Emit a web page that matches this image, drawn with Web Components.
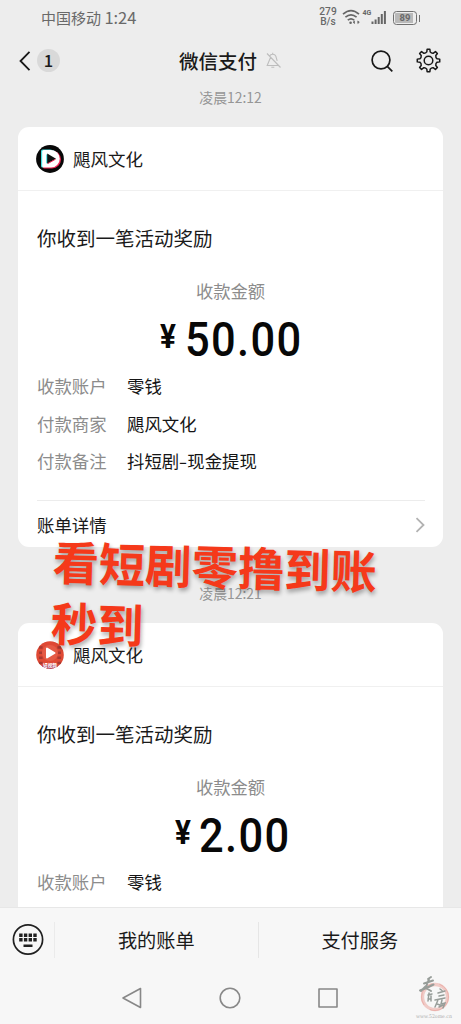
<!DOCTYPE html>
<html lang="zh-CN">
<head>
<meta charset="utf-8">
<title>微信支付</title>
<style>
html,body{margin:0;height:100%;overflow:hidden}
body{background:#ededed;font-family:"Noto Sans CJK SC",sans-serif;color:#1a1a1a}
</style>
</head>
<body>
<pay-app></pay-app>
<script>
const define = (name, html, after) => customElements.define(name, class extends HTMLElement {
  connectedCallback() {
    if (this.shadowRoot) return;
    const t = document.createElement('template');
    t.innerHTML = html;
    this.attachShadow({mode: 'open'}).append(t.content.cloneNode(true));
    if (after) after(this, this.shadowRoot);
  }
});

define('status-bar', `
<style>
:host{display:flex;height:36px;flex:none;align-items:center;padding:0 41px 0 41px;box-sizing:border-box;color:#696969;font-size:15px;line-height:20px}
.carrier{flex:1;white-space:nowrap;padding-bottom:2px}
.clock{font-size:16.500px}
.rate{display:flex;flex-direction:column;font:500 10.200px/11px Roboto,sans-serif;text-align:center;width:18px;margin-right:5px;margin-top:-2px}
.rate span{display:block;height:10.500px;line-height:10.500px}
svg{display:block}
.bat{display:flex;align-items:center;margin-left:5px}
.cell{box-sizing:border-box;width:24px;height:14px;border:1.4px solid #707070;border-radius:3.5px;padding:1px}
.fill{background:linear-gradient(90deg,#b9b9b9 88%,transparent 88%);height:100%;font:700 9.5px/10px Roboto,sans-serif;text-align:center;border-radius:1px}
.tip{width:1.5px;height:7px;background:#707070;margin-left:1.5px}
</style>
<div class="carrier">中国移动 <span class="clock">1:24</span></div>
<div class="rate"><span>279</span><span>B/s</span></div>
<svg width="46" height="18" viewBox="0 0 46 18" fill="none" stroke="#666" stroke-width="1.7">
<path d="M1 5.2Q9 -1.9 17 5.2M3.4 8.200Q9 3.4 14.6 8.200M5.8 11.2Q9 8.500 12.2 11.2"/><circle cx="8.6" cy="13.8" r="1.3" fill="#666" stroke="none"/>
<path d="M11 13.2l1.5-1.3v2.6zM17.3 13.2l-1.5-1.3v2.6z" fill="#666" stroke-width=".7"/>
<g fill="#666" stroke="none"><path d="M29.5 12.500h2v2.5h-2zM32.6 10.500h2v4.500h-2zM35.700 8h2v7h-2zM38.800 5h2v10h-2zM41.900 2h2v13h-2z"/>
<text x="20.500" y="6.300" font-family="Roboto,sans-serif" font-weight="700" font-size="7">4G</text></g>
</svg>
<div class="bat"><div class="cell"><div class="fill">89</div></div><div class="tip"></div></div>
`);

define('nav-header', `
<style>
:host{display:grid;grid-template-columns:160px auto 1fr;height:52px;flex:none;align-items:center;padding:0 20px 3px 18px;box-sizing:border-box}
.left{display:flex;align-items:center;gap:6px}
.badge{width:23px;height:23px;border-radius:50%;background:#d9d9d9;font-size:16.500px;line-height:23px;text-align:center;font-weight:500}
.title{font-size:19.5px;line-height:28px;font-weight:500;white-space:nowrap;margin-left:1px}
.right{display:flex;align-items:center;justify-content:space-between;padding-left:8px}
.tools{display:flex;align-items:center;gap:23px}
svg{display:block;fill:none}
</style>
<div class="left"><svg width="13" height="22" viewBox="0 0 13 22" stroke="#181818" stroke-width="1.8"><path d="M11.500 1.800L2.500 11l9 9.200"/></svg><span class="badge">1</span></div>
<div class="title">微信支付</div>
<div class="right">
<svg width="17" height="17" viewBox="0 0 17 17" stroke="#bdbdbd" stroke-width="1.100"><path d="M5.500 5.500L2.200 13.500h11M4.500 4q1-1.800 3.200-1.800 3 0 3.600 3.600l.9 3M7.700 2.200V.8M6.300 15.200h3M2 1.500L15.500 15.500"/></svg>
<div class="tools">
<svg width="22" height="22" viewBox="0 0 22 22" stroke="#181818" stroke-width="1.700"><circle cx="10" cy="10" r="8.900"/><path d="M16.300 16.300l5 5"/></svg>
<svg class="gear" width="25" height="25" viewBox="-12.500 -12.500 25 25" stroke="#181818" stroke-width="1.500" stroke-linejoin="round"><path/><circle r="4.300"/></svg>
</div></div>
`, (h, r) => {
  let d = '';
  for (let i = 0; i < 8; i++) {
    const p = (deg, rad) => { const a = (i * 45 + deg) * Math.PI / 180; return (Math.sin(a) * rad).toFixed(2) + ' ' + (-Math.cos(a) * rad).toFixed(2); };
    d += (i ? 'L' : 'M') + p(-7, 11.3) + 'L' + p(7, 11.3) + 'L' + p(11, 8.800) + 'Q' + p(22.500, 7.600) + ' ' + p(34, 8.800);
  }
  r.querySelector('.gear path').setAttribute('d', d + 'Z');
});

define('time-stamp', `
<style>:host{display:block;text-align:center;color:#969696;font-size:13.900px;line-height:19px;height:20px}</style><slot></slot>`);

define('shop-avatar', `
<style>:host{display:block;width:28px;height:28px}svg{display:block}</style><div></div>`, (h, r) => {
  r.querySelector('div').innerHTML = h.getAttribute('kind') === 'film' ? `
<svg width="28" height="28" viewBox="0 0 28 28"><defs><clipPath id="c"><circle cx="14" cy="14" r="13.800"/></clipPath></defs><g clip-path="url(#c)"><path d="M0 0h28v28H0z" fill="#df4934"/>
<path d="M4.800 0v28M23.200 0v28" stroke="#a93930" stroke-width="3.600" stroke-dasharray="2.500 2.700"/><circle cx="14" cy="12" r="8" fill="#e55b45"/><path d="M3 25.500q11-4 22 0v3H3z" fill="#a83c5d"/></g>
<path d="M11 7.500v9l7.500-4.500z" fill="#fff" stroke="#fff" stroke-width="2" stroke-linejoin="round"/>
<text x="14" y="25.500" text-anchor="middle" font-size="4.600" font-weight="700" fill="#fff" font-family="Noto Sans CJK SC,sans-serif">短视频</text></svg>` : `
<svg width="28" height="28" viewBox="0 0 28 28"><circle cx="14" cy="14" r="13.900" fill="#080808"/><g stroke-width="1" stroke-linejoin="round"><path d="M5 6q0-1.500 1.500-1.500H14a9 9 0 0 1 0 18H6.500Q5 22.500 5 21z" fill="#45dde0"/><path d="M7 7q0-1.500 1.500-1.500H16a9 9 0 0 1 0 18H8.500Q7 23.500 7 22z" fill="#ec2553"/><path d="M6.200 6.500Q6.200 5 7.700 5H15a8.700 8.700 0 0 1 0 17.500H7.700Q6.200 22.500 6.200 21z" fill="#fff"/></g><path d="M10.200 9.200v9.400l8.800-4.800z" fill="#45dde0"/><path d="M11.200 8.600v10.200l8.800-5z" fill="#101010"/><path d="M12 18.500l7.500-4.300" stroke="#ec2553"/></svg>`;
});

define('info-row', `
<style>:host{display:flex;height:37.700px;align-items:center;font-size:17.400px;line-height:26px}.k{width:90px;color:#8c8c8c}.v{color:#151515;white-space:nowrap}</style>
<span class="k"></span><span class="v"><slot></slot></span>`, (h, r) => { r.querySelector('.k').textContent = h.getAttribute('label'); });

define('money-amount', `
<style>
:host{display:flex;justify-content:center;height:60px;color:#080808;font-family:Roboto,sans-serif;font-weight:500;white-space:nowrap}
.yen{font-size:33px;line-height:53px;font-weight:700;transform:scaleX(.9);margin-right:8px}
.num{font-size:48px;line-height:60px;letter-spacing:1.500px;transform:scaleX(.905);transform-origin:0 50%;margin-right:-12px}
</style><span class="yen">¥</span><span class="num"><slot></slot></span>`);

define('pay-card', `
<style>
:host{display:block;width:425px;height:420px;background:#fff;border-radius:11px;box-sizing:border-box}
.head{display:flex;align-items:center;gap:9px;height:64px;box-sizing:border-box;border-bottom:1px solid #f0f0f0;padding-left:18px;font-size:17.500px;line-height:26px}
.body{padding:0 18px 0 19px}
.msg{padding-top:33px;font-size:19.500px;line-height:28px}
.label{padding:26px 1px 0 0;text-align:center;color:#8c8c8c;font-size:17.300px;line-height:26px}
.rows{margin-top:-3px;padding-bottom:20px;border-bottom:1px solid #ececec}
money-amount{margin-top:6px}
.detail{display:flex;align-items:center;justify-content:space-between;height:47px;font-size:17.400px;line-height:26px}
</style>
<div class="head"><shop-avatar></shop-avatar><span>飓风文化</span></div>
<div class="body"><div class="msg">你收到一笔活动奖励</div><div class="label">收款金额</div>
<money-amount></money-amount>
<div class="rows"><info-row label="收款账户">零钱</info-row><slot></slot></div>
<div class="detail"><span>账单详情</span><svg width="10" height="16" viewBox="0 0 10 16" fill="none" stroke="#b2b2b2" stroke-width="1.800"><path d="M1.500 1.200L8.500 8l-7 6.800"/></svg></div></div>
`, (h, r) => {
  r.querySelector('money-amount').textContent = h.getAttribute('amount');
  const a = document.createElement('shop-avatar');
  a.setAttribute('kind', h.getAttribute('kind'));
  r.querySelector('shop-avatar').replaceWith(a);
  if (h.hasAttribute('brief')) r.querySelector('.detail').remove();
});

define('menu-bar', `
<style>
:host{display:flex;height:65px;align-items:center;border-top:1px solid #e7e7e7;box-sizing:border-box}
.key{width:55px;height:36px;box-sizing:border-box;padding:2px 0 0 12px;border-right:1px solid #ebebeb}
.item{flex:1;text-align:center;font-size:19.200px;line-height:28px}
.item+.item{border-left:1px solid #e6e6e6;height:36px;line-height:36px}
svg{display:block}
</style>
<div class="key"><svg width="32" height="32" viewBox="0 0 32 32"><circle cx="16" cy="15.500" r="14.600" fill="none" stroke="#202020" stroke-width="1.700"/><path d="M7.200 9.500h3.400v3.400H7.200zm4.700 0h3.400v3.400h-3.400zm4.700 0h3.400v3.400h-3.400zm4.700 0h3.400v3.400h-3.400zM7.200 14h3.400v3.400H7.200zm4.700 0h3.400v3.400h-3.400zm4.700 0h3.400v3.400h-3.400zm4.700 0h3.400v3.400h-3.400zM11.500 20.500h9v2.500h-9z" fill="#202020"/></svg></div>
<div class="item">我的账单</div><div class="item">支付服务</div>`);

define('system-nav', `
<style>:host{display:flex;height:52px;align-items:center;justify-content:center;gap:76px;padding-right:1px;box-sizing:border-box}svg{display:block;fill:none;stroke:#888;stroke-width:1.600;stroke-linejoin:round}</style>
<svg width="22" height="22" viewBox="0 0 22 22"><path d="M19.500 1.500v19L2 11z"/></svg>
<svg width="22" height="22" viewBox="0 0 22 22"><circle cx="11" cy="11" r="9.800"/></svg>
<svg width="22" height="22" viewBox="0 0 22 22"><path d="M2 2h18v18H2z"/></svg>`);

define('site-mark', `
<style>:host{display:block;width:46px;height:50px}svg{display:block}</style>
<svg width="46" height="50" viewBox="0 0 46 50" fill="none" stroke-linecap="round"><circle cx="24" cy="23" r="12.500" stroke="#f0cbc7" stroke-width="3.400"/><circle cx="24" cy="23" r="13.500" stroke="#ebb0aa" stroke-width="1" stroke-dasharray="26 8"/>
<g stroke="#979d99"><path d="M17 5l3-2M13 9.500l9-3M18 5l-3 8M9 16.500q8-3 13.500-6M15 12l-5 5M15 14l5 3" stroke-width="2"/><path d="M18 19l-1 8M17 21l4-1M20 22v5M17 25h3M29 15l2 1.500M27 19l7-2M28 22l5-1M24 26l10-2M27 26l-3 7M26 30l3 1M31 26l-1 4 4-1-2 5M28 33l4-2" stroke-width="1.500"/></g>
<text x="5" y="43.500" textLength="36" lengthAdjust="spacingAndGlyphs" font-family="DejaVu Serif,serif" font-size="5" fill="#adadad" stroke="none">www.52ome.cn</text></svg>`);

define('caption-overlay', `
<style>:host{display:block;color:#f5391a;font-weight:700;font-size:46.300px;line-height:61px;white-space:nowrap;text-shadow:1px 3px 4px rgba(0,0,0,.32);transform:rotate(1.700deg);transform-origin:0 50%}</style><slot></slot>`);

define('pay-app', `
<style>
:host{display:flex;flex-direction:column;width:461px;height:1024px;overflow:hidden;position:relative;background:#ededed}
main{flex:1;min-height:0;overflow:hidden;display:flex;flex-direction:column;align-items:center}
main>*{flex:none}
time-stamp.a{margin-bottom:19px}
time-stamp.b{margin:37px 0 19px}
.dash{display:inline-block;margin:0 1px;transform:scaleX(1.400)}
footer{flex:none;background:#f7f7f7;height:117px}
caption-overlay{position:absolute;left:52px;top:529px}
site-mark{position:absolute;left:411px;top:974px}
</style>
<status-bar></status-bar><nav-header></nav-header>
<main>
<time-stamp class="a">凌晨12:12</time-stamp>
<pay-card kind="play" amount="50.00"><info-row label="付款商家">飓风文化</info-row><info-row label="付款备注">抖短剧<span class="dash">-</span>现金提现</info-row></pay-card>
<time-stamp class="b">凌晨12:21</time-stamp>
<pay-card kind="film" amount="2.00" brief></pay-card>
</main>
<footer><menu-bar></menu-bar><system-nav></system-nav></footer>
<caption-overlay>看短剧零撸到账<br>秒到</caption-overlay>
<site-mark></site-mark>`);
</script>
</body>
</html>
